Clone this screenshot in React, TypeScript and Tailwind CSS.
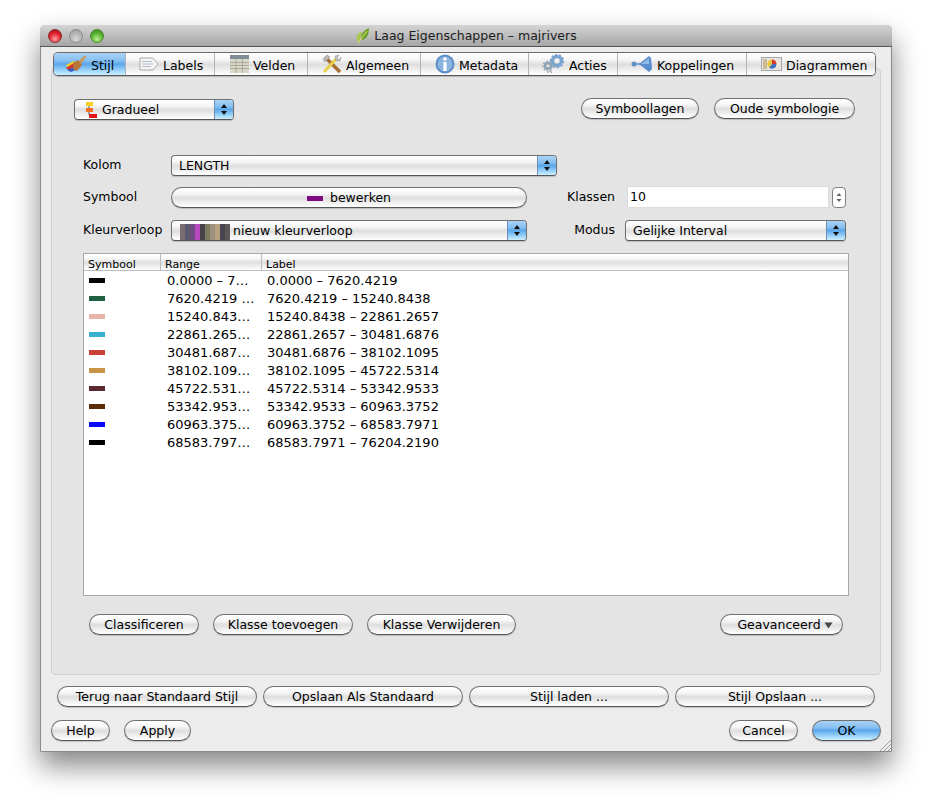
import React from 'react';

const gloss = 'bg-[linear-gradient(#ffffff_0%,#f6f6f6_30%,#dedede_52%,#ececec_72%,#ffffff_100%)]';
const blueGloss = 'bg-[linear-gradient(#a9d2f6_0%,#86bff0_35%,#5aa6ea_50%,#92cdf9_75%,#ccf0ff_100%)]';

const BrushIcon = () => (
  <svg width="21" height="20" viewBox="0 0 21 20">
    <path d="M0 11 L8 7 L10 10 L3 14 Z" fill="#f0d020" />
    <path d="M0 14 L8 9 L11 13 L4 17 Z" fill="#d8302c" />
    <path d="M1 16 L8 13 L10 16 L5 18 Z" fill="#3a5fc0" />
    <path d="M7 9 L12 6 L16 11 L11 17 L7 15 Z" fill="#b8763a" />
    <path d="M13 7 L19 1 L20 3 L15 10 Z" fill="#c99a55" />
  </svg>
);

const LabelIcon = () => (
  <svg width="20" height="14" viewBox="0 0 20 14">
    <path d="M1 1 H14 L19 7 L14 13 H1 Z" fill="#f4f4f6" stroke="#a9a9a9" />
    <path d="M3 4.5 H13 M3 7 H14 M3 9.5 H12" stroke="#b4bccb" />
  </svg>
);

const TableIcon = () => (
  <svg width="19" height="18" viewBox="0 0 19 18">
    <rect width="19" height="18" fill="#d8d8c8" />
    <rect width="19" height="4" fill="#7f8b95" />
    <path d="M0 7.5 H19 M0 10.5 H19 M0 13.5 H19 M6 4 V18 M12.5 4 V18" stroke="#aaaa98" />
  </svg>
);

const ToolsIcon = () => (
  <svg width="20" height="20" viewBox="0 0 20 20">
    <path d="M3 3 L18 18" stroke="#a86f35" strokeWidth="3.5" />
    <path d="M1 5 L5 1 L8 3 L3 8 Z" fill="#b8b8b8" stroke="#8a8a8a" strokeWidth="0.5" />
    <path d="M15 4 L2 18" stroke="#e8cf4c" strokeWidth="3" />
    <path d="M13 2 L17 1 L15 4 L17 6 L19 3 L18 7 L14 7 Z" fill="#c4c4c4" stroke="#8c8c8c" strokeWidth="0.5" />
  </svg>
);

const InfoIcon = () => (
  <svg width="20" height="20" viewBox="0 0 20 20">
    <circle cx="10" cy="10" r="9.5" fill="#5b8fc9" />
    <circle cx="10" cy="10" r="7.5" fill="#8bb5e0" />
    <circle cx="10" cy="5" r="1.8" fill="#ffffff" />
    <rect x="8.4" y="8" width="3.2" height="9" fill="#ffffff" />
  </svg>
);

const GearsIcon = () => (
  <svg width="23" height="20" viewBox="0 0 23 20">
    <circle cx="15" cy="7" r="4.5" fill="none" stroke="#7ba4cf" strokeWidth="3.5" />
    <circle cx="15" cy="7" r="6.5" fill="none" stroke="#7ba4cf" strokeWidth="1.5" strokeDasharray="2 2" />
    <circle cx="6" cy="12" r="3" fill="none" stroke="#8ca2b8" strokeWidth="2.5" />
    <circle cx="6" cy="12" r="5" fill="none" stroke="#8ca2b8" strokeWidth="1.2" strokeDasharray="2 1.5" />
    <path d="M6 13 L6 19 L8 17 L10 19 Z" fill="#f2f2f2" stroke="#777" strokeWidth="0.5" />
  </svg>
);

const JoinIcon = () => (
  <svg width="22" height="18" viewBox="0 0 22 18">
    <circle cx="3" cy="9" r="2.5" fill="#5f8fc8" />
    <path d="M5 9 H9" stroke="#5f8fc8" strokeWidth="1.5" />
    <path d="M8 9 L18 1 L20 3 L21 14 L18 17 Z" fill="#5b8ed0" />
    <path d="M10 9 L18 3 L18 9 Z" fill="#8fb8e6" />
  </svg>
);

const ChartIcon = () => (
  <svg width="21" height="14" viewBox="0 0 21 14">
    <rect x="0.5" y="0.5" width="20" height="13" fill="#e4e4e4" stroke="#a8a8a8" />
    <rect x="2" y="2" width="17" height="10" fill="#ece6d8" />
    <rect x="2" y="2" width="4" height="10" fill="#cdbb98" />
    <path d="M11 7 L11 2.5 A4.5 4.5 0 0 1 15.5 7 Z" fill="#d23a30" />
    <path d="M11 7 L15.5 7 A4.5 4.5 0 0 1 8 10.5 Z" fill="#3d6fc4" />
    <path d="M11 7 L8 10.5 A4.5 4.5 0 0 1 11 2.5 Z" fill="#e8c840" />
  </svg>
);

const GraduatedIcon = () => (
  <svg width="11" height="17" viewBox="0 0 11 17">
    <path d="M3 3 V13 H6 M3 8 H6" stroke="#555" fill="none" />
    <rect x="0" y="0" width="7" height="4" fill="#f4d020" />
    <rect x="0" y="6" width="7" height="4" fill="#f07020" />
    <rect x="3" y="12" width="8" height="4" fill="#e81818" />
  </svg>
);

const LeafIcon = () => (
  <svg width="15" height="17" viewBox="0 0 15 17">
    <path d="M3 16 C0 10 3 5 7 5 C5 9 6 12 3 16 Z" fill="#a9c84a" />
    <path d="M7 13 C4 8 9 3 14 1 C14 7 12 12 7 13 Z" fill="#6fa02c" />
    <path d="M3 16 C6 12 9 8 12 4" stroke="#e8e070" fill="none" />
  </svg>
);

const tabs = [
  { label: 'Stijl', w: 'w-[72px]', pl: 'pl-[12px]', icon: <BrushIcon />, active: true },
  { label: 'Labels', w: 'w-[89px]', pl: 'pl-[13px]', icon: <LabelIcon /> },
  { label: 'Velden', w: 'w-[93px]', pl: 'pl-[15px]', icon: <TableIcon /> },
  { label: 'Algemeen', w: 'w-[113px]', pl: 'pl-[14px]', icon: <ToolsIcon /> },
  { label: 'Metadata', w: 'w-[108px]', pl: 'pl-[14px]', icon: <InfoIcon /> },
  { label: 'Acties', w: 'w-[89px]', pl: 'pl-[13px]', icon: <GearsIcon /> },
  { label: 'Koppelingen', w: 'w-[129px]', pl: 'pl-[13px]', icon: <JoinIcon /> },
  { label: 'Diagrammen', w: 'w-[130px]', pl: 'pl-[14px]', icon: <ChartIcon /> },
];

const rows = [
  { color: 'bg-[#050505]', range: '0.0000 – 7…', label: '0.0000 – 7620.4219' },
  { color: 'bg-[#1f6040]', range: '7620.4219 …', label: '7620.4219 – 15240.8438' },
  { color: 'bg-[#e8b4a8]', range: '15240.843…', label: '15240.8438 – 22861.2657' },
  { color: 'bg-[#38b0d0]', range: '22861.265…', label: '22861.2657 – 30481.6876' },
  { color: 'bg-[#c84038]', range: '30481.687…', label: '30481.6876 – 38102.1095' },
  { color: 'bg-[#c89448]', range: '38102.109…', label: '38102.1095 – 45722.5314' },
  { color: 'bg-[#5c2830]', range: '45722.531…', label: '45722.5314 – 53342.9533' },
  { color: 'bg-[#5c2c08]', range: '53342.953…', label: '53342.9533 – 60963.3752' },
  { color: 'bg-[#0808ff]', range: '60963.375…', label: '60963.3752 – 68583.7971' },
  { color: 'bg-[#000000]', range: '68583.797…', label: '68583.7971 – 76204.2190' },
];

const rampColors = ['#7a6e70', '#5b5a70', '#6f4c80', '#b848c0', '#48424a', '#7c7a60', '#a09080', '#b8a080', '#484450', '#5c5656'];

const Btn: React.FC<{ w: string; children: React.ReactNode; blue?: boolean }> = ({ w, children, blue }) => (
  <button
    className={`${w} h-[21px] shrink-0 rounded-full border border-[#707070] border-b-[#555] pt-[2px] flex items-center justify-center text-[12.5px] leading-none text-black shadow-[0_1px_1px_rgba(0,0,0,0.18)] ${blue ? blueGloss : gloss}`}
  >
    {children}
  </button>
);

const Combo: React.FC<{ w: string; children: React.ReactNode }> = ({ w, children }) => (
  <div className={`${w} h-[21px] shrink-0 rounded-[4px] border border-[#707070] border-b-[#555] flex overflow-hidden text-[12.5px] text-black shadow-[0_1px_1px_rgba(0,0,0,0.18)] ${gloss}`}>
    <div className="flex-1 min-w-0 flex items-center pt-[2px]">{children}</div>
    <div className={`w-[19px] flex items-center justify-center border-l border-[#6f8fb8] ${blueGloss}`}>
      <svg width="8" height="13" viewBox="0 0 8 13">
        <path d="M4 1 L7 5 H1 Z M4 12 L1 8 H7 Z" fill="#111" />
      </svg>
    </div>
  </div>
);

export default function App() {
  return (
    <div className="w-[932px] h-[800px] overflow-hidden bg-white pt-[25px] pl-[40px] font-['DejaVu_Sans',sans-serif] text-black">
      <div className="relative w-[852px] h-[727px] flex flex-col rounded-t-[5px] bg-[#ececec] outline outline-[#8a8a8a] -outline-offset-1 shadow-[0_14px_28px_rgba(0,0,0,0.48)]">
        {/* Title bar */}
        <div className="relative h-[22px] shrink-0 flex items-center justify-center gap-[4px] rounded-t-[5px] border-b border-[#555] bg-[linear-gradient(#d4d4d4,#a6a6a6)] text-[12.5px] text-[#1c1c1c]">
          <div className="absolute left-[8px] top-[4px] flex items-center gap-[7px]">
            <span className="w-[14px] h-[14px] rounded-full border border-[#8c2a2a] bg-[radial-gradient(circle_at_50%_75%,#ff9c9c,#e0202c_55%,#96101a)]" />
            <span className="w-[14px] h-[14px] rounded-full border border-[#8c8c8c] bg-[radial-gradient(circle_at_50%_75%,#d8d8d8,#b0b0b0_60%,#9a9a9a)]" />
            <span className="w-[14px] h-[14px] rounded-full border border-[#4c8a2c] bg-[radial-gradient(circle_at_50%_75%,#b8f090,#58b030_55%,#3a8420)]" />
          </div>
          <LeafIcon />
          <span className="pt-[2px]">Laag Eigenschappen – majrivers</span>
        </div>

        {/* Tabs */}
        <div className="relative z-10 mt-[5px] ml-[13px] w-[823px] h-[24px] flex rounded-[5px] border border-[#6c6c6c] border-b-[#555] overflow-hidden shadow-[0_1px_1px_rgba(0,0,0,0.2)]">
          {tabs.map((t) => (
            <div
              key={t.label}
              className={`${t.w} ${t.pl} ${t.active ? blueGloss : gloss} shrink-0 flex items-center gap-[4px] border-r border-[#b4b4b4] last:border-r-0 text-[12.5px] leading-none`}
            >
              {t.icon}
              <span className="pt-[4px]">{t.label}</span>
            </div>
          ))}
        </div>

        {/* Pane */}
        <div className="-mt-[8px] ml-[11px] w-[830px] rounded-[4px] border border-[#d0d0d0] bg-[#e4e4e4] pt-[29px] pb-[39px] pl-[22px] pr-[25px]">
          <div className="h-[22px] flex justify-between">
            <div className="mt-px">
              <Combo w="w-[160px]">
                <div className="pl-[11px] flex items-center gap-[5px]">
                  <GraduatedIcon />
                  <span>Gradueel</span>
                </div>
              </Combo>
            </div>
            <div className="flex gap-[15px]">
              <Btn w="w-[118px]">Symboollagen</Btn>
              <Btn w="w-[141px]">Oude symbologie</Btn>
            </div>
          </div>

          <div className="mt-[35px] ml-[9px] flex items-center h-[21px] text-[12.5px]">
            <span className="w-[88px]">Kolom</span>
            <Combo w="w-[386px]">
              <span className="pl-[7px]">LENGTH</span>
            </Combo>
          </div>

          <div className="mt-[10px] ml-[9px] flex items-center h-[22px] text-[12.5px]">
            <span className="w-[88px]">Symbool</span>
            <Btn w="w-[356px]">
              <span className="w-[16px] h-[5px] bg-[#800a84] mr-[7px]" />
              bewerken
            </Btn>
            <span className="w-[88px] text-right">Klassen</span>
            <div className="ml-[12px] w-[202px] h-[22px] bg-white border border-[#dcdcdc] flex items-center pl-[2px]">10</div>
            <div className="ml-[3px] w-[14px] h-[21px] rounded-[4px] border border-[#808080] bg-white flex items-center justify-center">
              <svg width="8" height="13" viewBox="0 0 8 13">
                <path d="M4 2 L6.5 5 H1.5 Z M4 11 L1.5 8 H6.5 Z" fill="#666" />
              </svg>
            </div>
          </div>

          <div className="mt-[12px] ml-[9px] flex items-center h-[21px] text-[12.5px]">
            <span className="w-[88px]">Kleurverloop</span>
            <Combo w="w-[356px]">
              <div className="pl-[8px] flex items-center gap-[3px]">
                <svg width="50" height="16" viewBox="0 0 50 16">
                  {rampColors.map((c, i) => (
                    <rect key={i} x={i * 5} width="5" height="16" fill={c} />
                  ))}
                </svg>
                <span>nieuw kleurverloop</span>
              </div>
            </Combo>
            <span className="w-[88px] text-right">Modus</span>
            <div className="ml-[10px]">
              <Combo w="w-[221px]">
                <span className="pl-[7px]">Gelijke Interval</span>
              </Combo>
            </div>
          </div>

          {/* Class table */}
          <div className="mt-[12px] ml-[9px] w-[766px] h-[343px] bg-white border border-[#a8a8a8]">
            <div className={`h-[17px] flex items-center border-b border-[#bdbdbd] text-[11px] leading-none ${gloss}`}>
              <span className="w-[77px] h-full pl-[4px] pt-[4px] flex items-center border-r border-[#bdbdbd]">Symbool</span>
              <span className="w-[101px] h-full pl-[4px] pt-[4px] flex items-center border-r border-[#bdbdbd]">Range</span>
              <span className="pl-[4px] pt-[4px]">Label</span>
            </div>
            {rows.map((r) => (
              <div key={r.label} className="h-[18px] flex items-center text-[13px] leading-none">
                <div className="w-[83px] pl-[5px]">
                  <div className={`w-[16px] h-[5px] ${r.color}`} />
                </div>
                <span className="w-[100px] whitespace-nowrap">{r.range}</span>
                <span className="whitespace-nowrap">{r.label}</span>
              </div>
            ))}
          </div>

          <div className="mt-[18px] ml-[15px] flex gap-[14px]">
            <Btn w="w-[110px]">Classificeren</Btn>
            <Btn w="w-[140px]">Klasse toevoegen</Btn>
            <Btn w="w-[149px]">Klasse Verwijderen</Btn>
            <div className="ml-[190px]">
              <Btn w="w-[123px]">
                <span className="ml-[7px]">Geavanceerd</span>
                <svg className="ml-[3px]" width="9" height="7" viewBox="0 0 9 7">
                  <path d="M0.5 0.5 H8.5 L4.5 6.5 Z" fill="#444" />
                </svg>
              </Btn>
            </div>
          </div>
        </div>

        <div className="mt-[11px] ml-[17px] flex gap-[6px]">
          <Btn w="w-[200px]">Terug naar Standaard Stijl</Btn>
          <Btn w="w-[200px]">Opslaan Als Standaard</Btn>
          <Btn w="w-[200px]">Stijl laden ...</Btn>
          <Btn w="w-[200px]">Stijl Opslaan ...</Btn>
        </div>

        <div className="mt-[13px] mx-[11px] flex justify-between">
          <div className="flex gap-[14px]">
            <Btn w="w-[59px]">Help</Btn>
            <Btn w="w-[67px]">Apply</Btn>
          </div>
          <div className="flex gap-[14px]">
            <Btn w="w-[69px]">Cancel</Btn>
            <Btn w="w-[69px]" blue>OK</Btn>
          </div>
        </div>

        <svg className="absolute right-[1px] bottom-[1px]" width="11" height="11" viewBox="0 0 11 11">
          <path d="M0 11 L11 0 M4 11 L11 4 M8 11 L11 8" stroke="#a0a0a0" />
        </svg>
      </div>
    </div>
  );
}
